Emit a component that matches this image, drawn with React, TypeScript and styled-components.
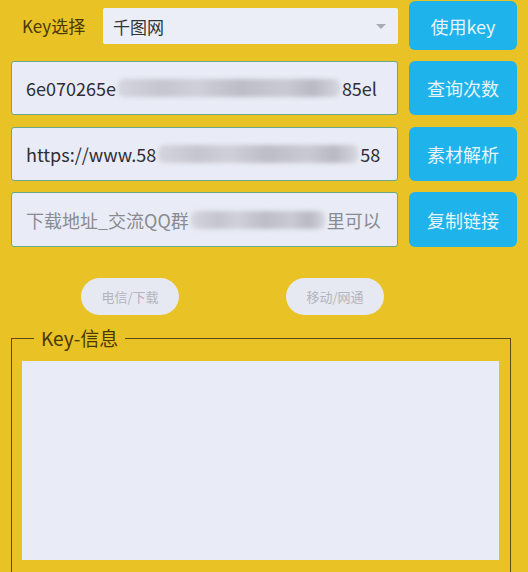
import React from 'react';
import styled, { createGlobalStyle } from 'styled-components';

// ── Global ────────────────────────────────────────────────────────────────────

const GlobalStyle = createGlobalStyle`
  html, body {
    margin: 0;
    padding: 0;
    background: #e9c226;
    overflow: hidden;
  }
  body {
    font-family: "Noto Sans CJK SC", "Noto Sans", sans-serif;
  }
`;

// ── Layout ────────────────────────────────────────────────────────────────────

const Page = styled.div`
  width: 528px;
  height: 572px;
  box-sizing: border-box;
  padding: 1px 11px 0 11px;
  background: #e9c226;
  display: flex;
  flex-direction: column;
  overflow: hidden;
`;

const Row = styled.div<{ $h: number; $mt?: number }>`
  display: grid;
  grid-template-columns: 1fr 108px;
  column-gap: 11px;
  height: ${p => p.$h}px;
  margin-top: ${p => p.$mt ?? 0}px;
  flex-shrink: 0;
`;

const KeyPick = styled.div`
  display: flex;
  align-items: center;
  padding-left: 11px;
`;

const Label = styled.span`
  font-size: 17px;
  color: #4a3a06;
  width: 81px;
  flex-shrink: 0;
`;

const Select = styled.div`
  flex: 1;
  height: 36px;
  margin-top: 1px;
  background: #eceef7;
  border-radius: 2px;
  display: flex;
  align-items: center;
  justify-content: space-between;
  padding: 0 12px 0 10px;
  font-size: 17px;
  color: #333;
`;

const Caret = styled.span`
  width: 0;
  height: 0;
  border-left: 5px solid transparent;
  border-right: 5px solid transparent;
  border-top: 5px solid #a9abb4;
`;

const Field = styled.div<{ $muted?: boolean }>`
  box-sizing: border-box;
  background: #e9ecf6;
  border: 1px solid #6aa783;
  border-radius: 3px;
  padding: 0 14px;
  display: flex;
  align-items: center;
  font-size: 18px;
  color: ${p => (p.$muted ? '#8a8a90' : '#2e2e33')};
  overflow: hidden;
`;

const FieldText = styled.div`
  white-space: nowrap;
  display: flex;
  align-items: center;
  width: 100%;
`;

const Smudge = styled.span<{ $w: number }>`
  display: inline-block;
  flex-shrink: 0;
  width: ${p => p.$w}px;
  height: 18px;
  margin: 0 2px;
  border-radius: 6px;
  background: linear-gradient(
    90deg,
    #d4d5de 0%,
    #c4c5cf 20%,
    #cfd0d9 35%,
    #bcbdc7 55%,
    #c9cad3 75%,
    #b8b9c3 88%,
    #d6d7df 100%
  );
  filter: blur(2px);
`;

const ActionBtn = styled.button`
  border: none;
  border-radius: 6px;
  background: #1eb3ea;
  color: #e9f4fa;
  font-family: inherit;
  font-size: 18px;
  cursor: pointer;
  padding: 0;
`;

const PillBar = styled.div`
  display: flex;
  margin-top: 31px;
  padding-left: 70px;
  gap: 107px;
  flex-shrink: 0;
`;

const Pill = styled.button`
  width: 98px;
  height: 37px;
  border: none;
  border-radius: 19px;
  background: #e6e8f2;
  color: #b3b4bd;
  font-family: inherit;
  font-size: 13px;
  padding: 0;
`;

const Group = styled.fieldset`
  margin: 13px 6px 0 0;
  padding: 13px 11px 0 10px;
  border: 1px solid #5b4a12;
  border-bottom: none;
  min-width: 0;
  flex: 1;
  display: flex;
  flex-direction: column;
`;

const GroupTitle = styled.legend`
  margin-left: 12px;
  padding: 0 7px;
  font-size: 19px;
  line-height: 20px;
  color: #4a3804;
`;

const InfoBox = styled.div`
  height: 199px;
  background: #e9ebf6;
`;

// ── Component ─────────────────────────────────────────────────────────────────

export default function App() {
  return (
    <>
      <GlobalStyle />
      <Page>
        <Row $h={49}>
          <KeyPick>
            <Label>Key选择</Label>
            <Select>
              <span>千图网</span>
              <Caret />
            </Select>
          </KeyPick>
          <ActionBtn>使用key</ActionBtn>
        </Row>

        <Row $h={54} $mt={11}>
          <Field>
            <FieldText>
              6e070265e<Smudge $w={222} />85el
            </FieldText>
          </Field>
          <ActionBtn>查询次数</ActionBtn>
        </Row>

        <Row $h={54} $mt={12}>
          <Field>
            <FieldText>
              https://www.58<Smudge $w={200} />58
            </FieldText>
          </Field>
          <ActionBtn>素材解析</ActionBtn>
        </Row>

        <Row $h={55} $mt={11}>
          <Field $muted>
            <FieldText>
              下载地址_交流QQ群<Smudge $w={134} />里可以
            </FieldText>
          </Field>
          <ActionBtn>复制链接</ActionBtn>
        </Row>

        <PillBar>
          <Pill>电信/下载</Pill>
          <Pill>移动/网通</Pill>
        </PillBar>

        <Group>
          <GroupTitle>Key-信息</GroupTitle>
          <InfoBox />
        </Group>
      </Page>
    </>
  );
}
